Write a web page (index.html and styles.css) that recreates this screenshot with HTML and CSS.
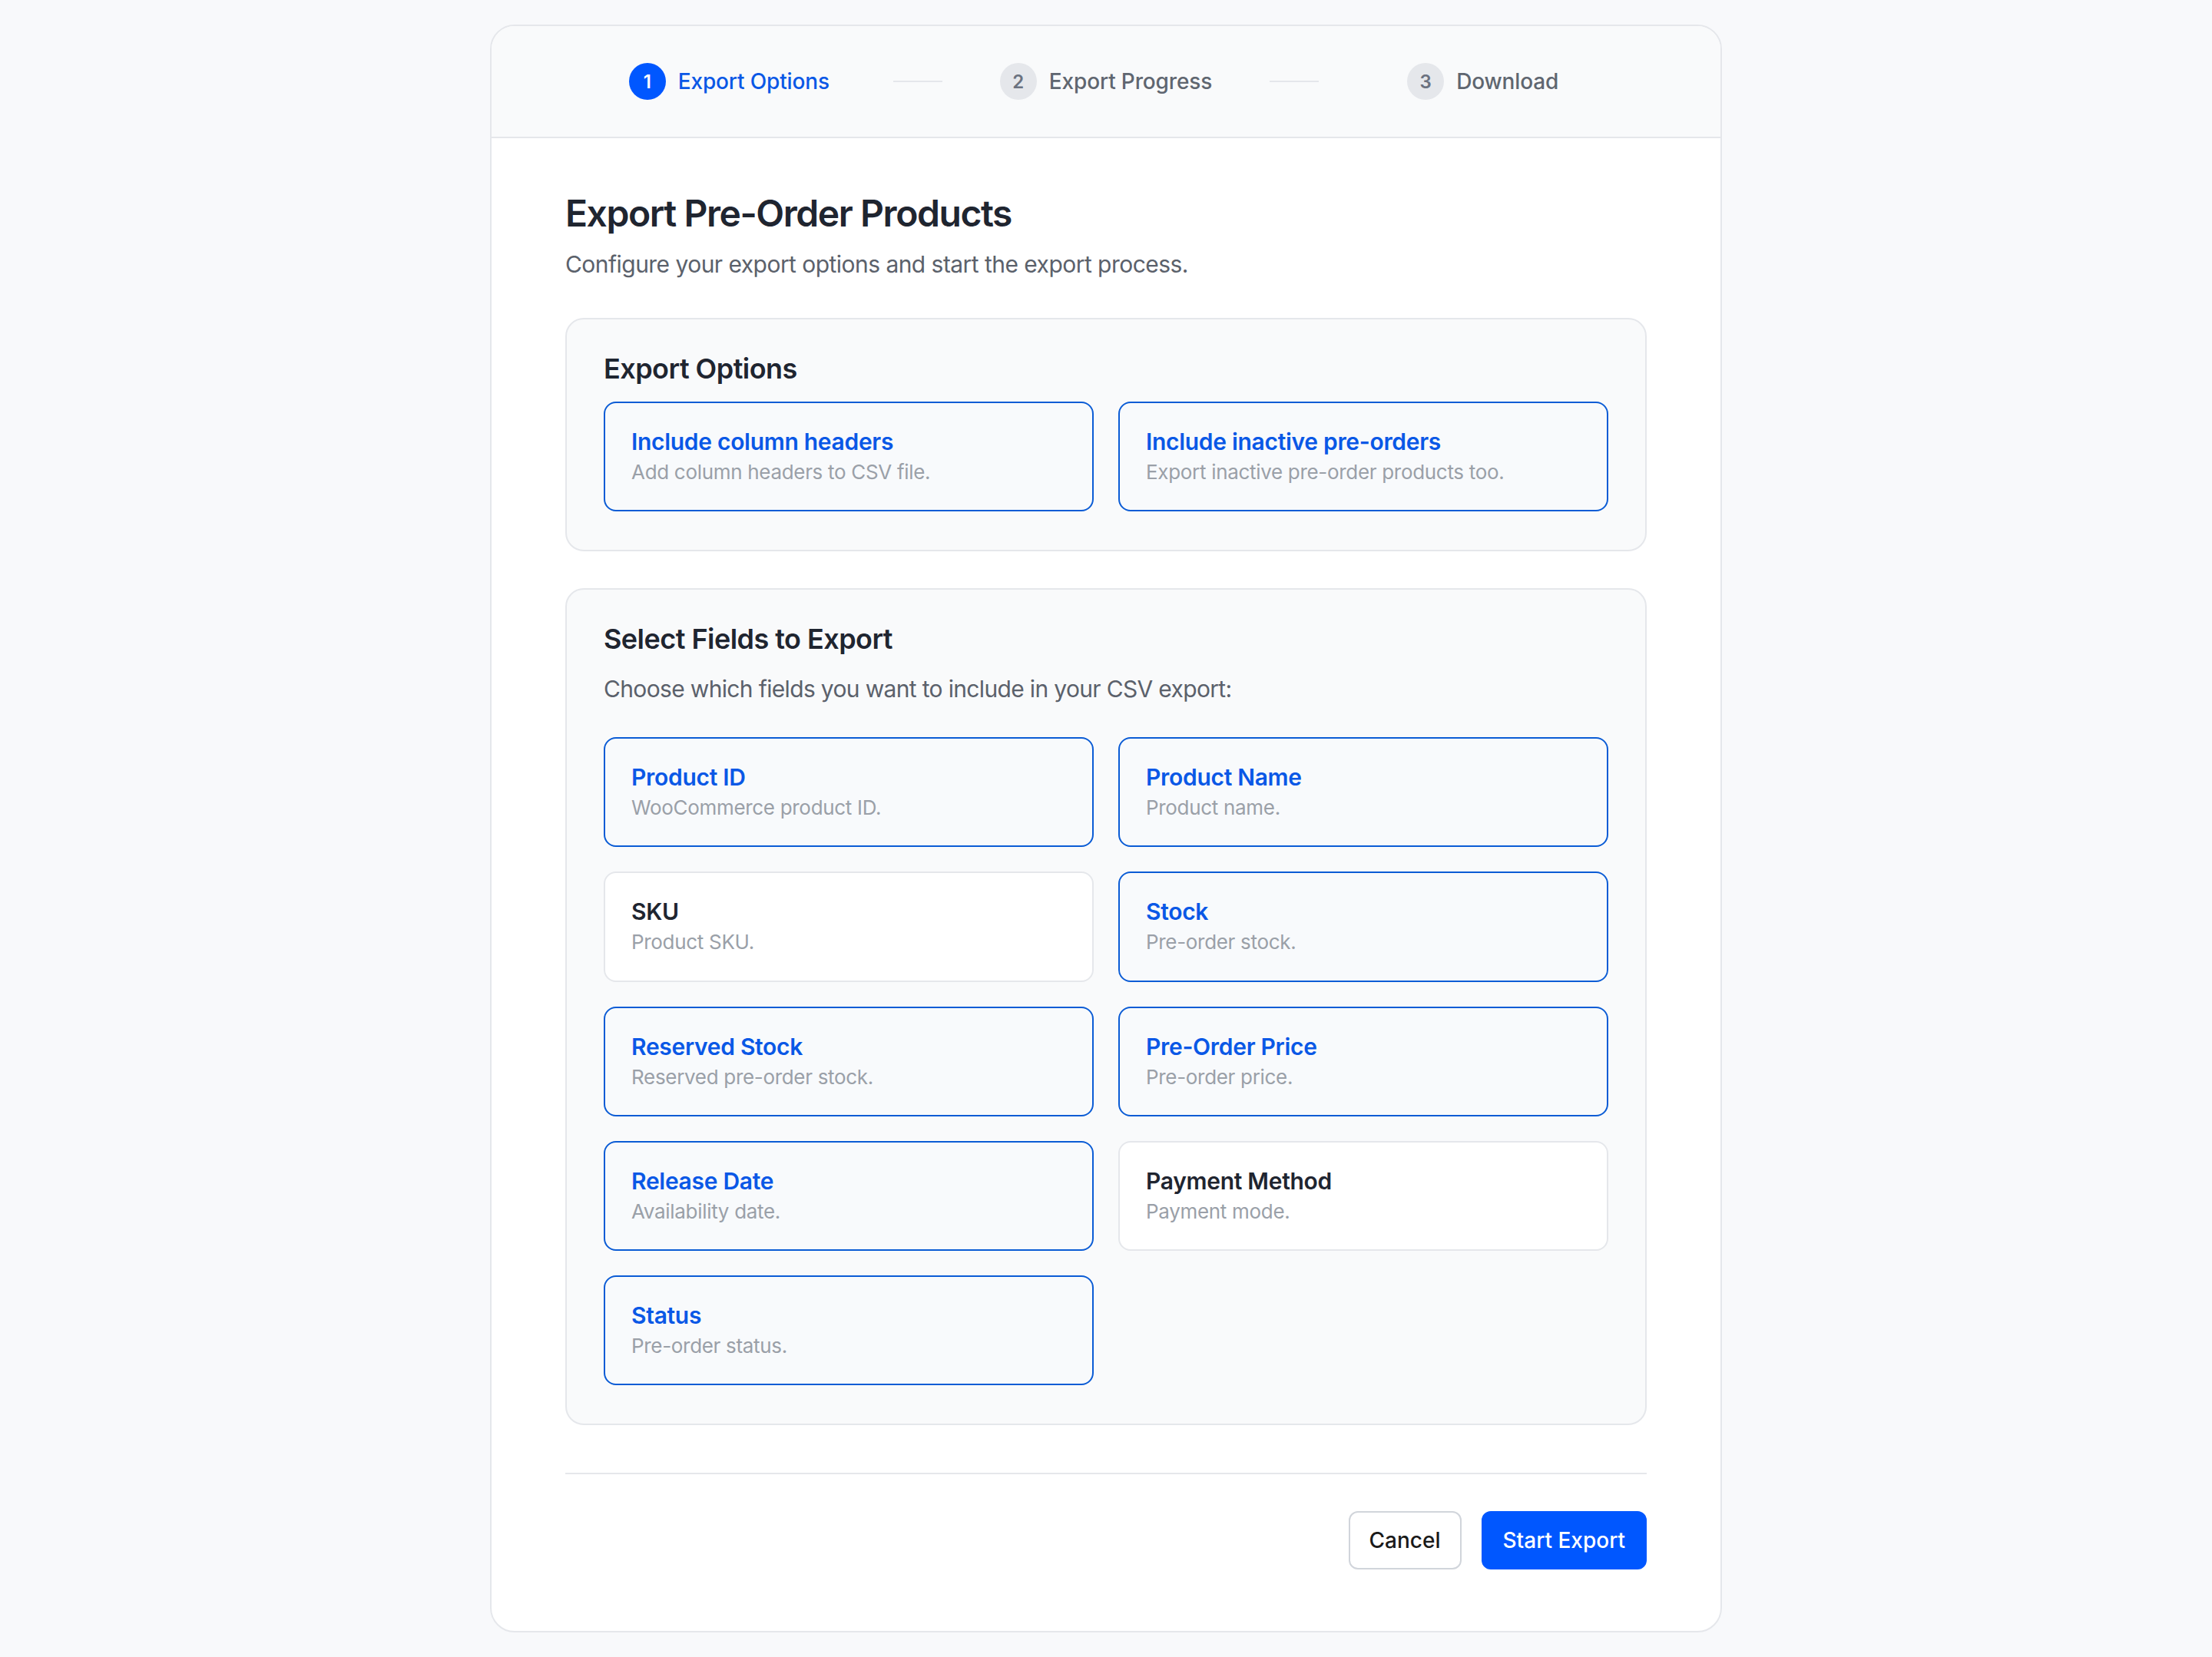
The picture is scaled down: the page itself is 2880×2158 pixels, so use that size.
FILE: index.html
```html
<!DOCTYPE html>
<html lang="en">
<head>
<meta charset="utf-8">
<title>Export Pre-Order Products</title>
<link rel="stylesheet" href="styles.css">
</head>
<body>
<div class="wizard">
  <div class="steps">
    <div class="step active"><span class="num">1</span><span class="label">Export Options</span></div>
    <div class="line"></div>
    <div class="step"><span class="num">2</span><span class="label">Export Progress</span></div>
    <div class="line"></div>
    <div class="step"><span class="num">3</span><span class="label">Download</span></div>
  </div>
  <div class="content">
    <h1 class="title">Export Pre-Order Products</h1>
    <p class="subtitle">Configure your export options and start the export process.</p>

    <section class="panel">
      <h2 class="panel-title">Export Options</h2>
      <div class="grid">
        <div class="opt on"><div class="opt-title">Include column headers</div><div class="opt-desc">Add column headers to CSV file.</div></div>
        <div class="opt on"><div class="opt-title">Include inactive pre-orders</div><div class="opt-desc">Export inactive pre-order products too.</div></div>
      </div>
    </section>

    <section class="panel">
      <h2 class="panel-title">Select Fields to Export</h2>
      <p class="panel-sub">Choose which fields you want to include in your CSV export:</p>
      <div class="grid">
        <div class="opt on"><div class="opt-title">Product ID</div><div class="opt-desc">WooCommerce product ID.</div></div>
        <div class="opt on"><div class="opt-title">Product Name</div><div class="opt-desc">Product name.</div></div>
        <div class="opt"><div class="opt-title">SKU</div><div class="opt-desc">Product SKU.</div></div>
        <div class="opt on"><div class="opt-title">Stock</div><div class="opt-desc">Pre-order stock.</div></div>
        <div class="opt on"><div class="opt-title">Reserved Stock</div><div class="opt-desc">Reserved pre-order stock.</div></div>
        <div class="opt on"><div class="opt-title">Pre-Order Price</div><div class="opt-desc">Pre-order price.</div></div>
        <div class="opt on"><div class="opt-title">Release Date</div><div class="opt-desc">Availability date.</div></div>
        <div class="opt"><div class="opt-title">Payment Method</div><div class="opt-desc">Payment mode.</div></div>
        <div class="opt on"><div class="opt-title">Status</div><div class="opt-desc">Pre-order status.</div></div>
      </div>
    </section>

    <div class="footer">
      <button class="btn btn-secondary">Cancel</button>
      <button class="btn btn-primary">Start Export</button>
    </div>
  </div>
</div>
</body>
</html>
```

FILE: styles.css
```css
html {
  zoom: 2;
}
* {
  box-sizing: border-box;
}
body {
  margin: 0;
  padding: 16px 0;
  background: #f8f9fb;
  font-family: Inter, "Noto Sans", "Liberation Sans", sans-serif;
  color: #111827;
}
.wizard {
  width: 802px;
  margin: 0 auto;
  background: #ffffff;
  border: 1px solid #e5e7eb;
  border-radius: 16px;
  overflow: hidden;
}
.steps {
  display: flex;
  align-items: center;
  padding: 24px 48px;
  background: #f9fafb;
  border-bottom: 1px solid #e5e7eb;
}
.step {
  flex: 1;
  display: flex;
  align-items: center;
  justify-content: center;
  gap: 8px;
  height: 24px;
}
.num {
  width: 24px;
  height: 24px;
  border-radius: 50%;
  background: #e5e7eb;
  color: #6b7280;
  font-size: 12px;
  font-weight: 600;
  display: flex;
  align-items: center;
  justify-content: center;
}
.label {
  font-size: 14px;
  font-weight: 500;
  color: #5f6670;
  letter-spacing: -0.005em;
}
.step.active .num {
  background: #0057ff;
  color: #ffffff;
}
.step.active .label {
  color: #0a58e6;
}
.line {
  width: 32px;
  height: 1px;
  background: #e5e7eb;
}
.content {
  padding: 33px 48px 40px;
}
.title {
  margin: 0 0 5px;
  font-size: 24px;
  line-height: 32px;
  font-weight: 600;
  color: #1f2530;
  letter-spacing: -0.03em;
}
.subtitle {
  margin: 0 0 23px;
  font-size: 15px;
  line-height: 24px;
  color: #5b616b;
  letter-spacing: -0.018em;
}
.panel {
  background: #f9fafb;
  border: 1px solid #e5e7eb;
  border-radius: 12px;
  padding: 20px 24px 25px;
  margin-bottom: 24px;
}
.panel:last-of-type {
  margin-bottom: 0;
}
.panel-title {
  margin: 0 0 9.5px;
  font-size: 18px;
  line-height: 24px;
  font-weight: 600;
  color: #1f2530;
  letter-spacing: -0.015em;
}
.panel-sub {
  margin: -1px 0 19.5px;
  font-size: 15px;
  line-height: 24px;
  color: #5b616b;
  letter-spacing: -0.022em;
}
.grid {
  display: grid;
  grid-template-columns: 1fr 1fr;
  gap: 16px;
}
.opt {
  background: #ffffff;
  border: 1px solid #e5e7eb;
  border-radius: 8px;
  padding: 15px 17px;
  height: 71.6px;
}
.opt.on {
  background: #f8fafc;
  border-color: #0b5cd5;
}
.opt-title {
  font-size: 15px;
  line-height: 20px;
  font-weight: 600;
  color: #1f2530;
  letter-spacing: -0.01em;
}
.opt.on .opt-title {
  color: #0a58e6;
}
.opt-desc {
  font-size: 13px;
  line-height: 20px;
  color: #9aa0a8;
  letter-spacing: -0.012em;
}
.footer {
  margin-top: 31px;
  border-top: 1px solid #e5e7eb;
  padding-top: 24px;
  display: flex;
  justify-content: flex-end;
  gap: 13px;
}
.btn {
  height: 38px;
  border-radius: 6px;
  font-family: Inter, "Noto Sans", "Liberation Sans", sans-serif;
  font-size: 14px;
  font-weight: 500;
  padding: 0 12.5px;
  cursor: pointer;
}
.btn-secondary {
  background: #ffffff;
  border: 1px solid #d1d5db;
  color: #1a1a1a;
}
.btn-primary {
  background: #0057ff;
  border: 1px solid #0057ff;
  color: #ffffff;
  padding: 0 13px;
}
```
